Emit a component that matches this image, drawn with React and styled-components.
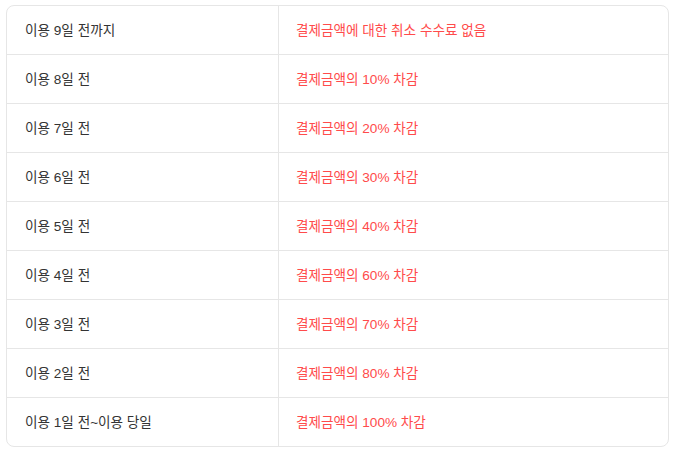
import React from "react";
import styled, { createGlobalStyle } from "styled-components";

const Global = createGlobalStyle`
  html, body { margin: 0; padding: 0; background: #fff; }
  body { font-family: "Liberation Sans", "Noto Sans CJK KR", sans-serif; }
`;

const Page = styled.div`
  padding: 5px 8px 6px 6px;
`;

const Table = styled.div`
  border: 1px solid #e6e6e6;
  border-radius: 8px;
  overflow: hidden;
  display: grid;
  grid-template-columns: 272px 1fr;
`;

const Cell = styled.div`
  box-sizing: border-box;
  height: ${(p) => (p.$last ? "48px" : "49px")};
  display: flex;
  align-items: center;
  padding-left: ${(p) => (p.$right ? "17px" : "18px")};
  padding-top: 1px;
  font-size: 13.6px;
  line-height: 1;
  color: ${(p) => (p.$right ? "#ff4b4b" : "#333")};
  border-right: ${(p) => (p.$right ? "none" : "1px solid #e6e6e6")};
  border-bottom: ${(p) => (p.$last ? "none" : "1px solid #e6e6e6")};
`;

const rows = [
  ["이용 9일 전까지", "결제금액에 대한 취소 수수료 없음"],
  ["이용 8일 전", "결제금액의 10% 차감"],
  ["이용 7일 전", "결제금액의 20% 차감"],
  ["이용 6일 전", "결제금액의 30% 차감"],
  ["이용 5일 전", "결제금액의 40% 차감"],
  ["이용 4일 전", "결제금액의 60% 차감"],
  ["이용 3일 전", "결제금액의 70% 차감"],
  ["이용 2일 전", "결제금액의 80% 차감"],
  ["이용 1일 전~이용 당일", "결제금액의 100% 차감"],
];

export default function App() {
  return (
    <Page>
      <Global />
      <Table>
        {rows.map(([a, b], i) => (
          <React.Fragment key={i}>
            <Cell $last={i === rows.length - 1}>{a}</Cell>
            <Cell $right $last={i === rows.length - 1}>{b}</Cell>
          </React.Fragment>
        ))}
      </Table>
    </Page>
  );
}
